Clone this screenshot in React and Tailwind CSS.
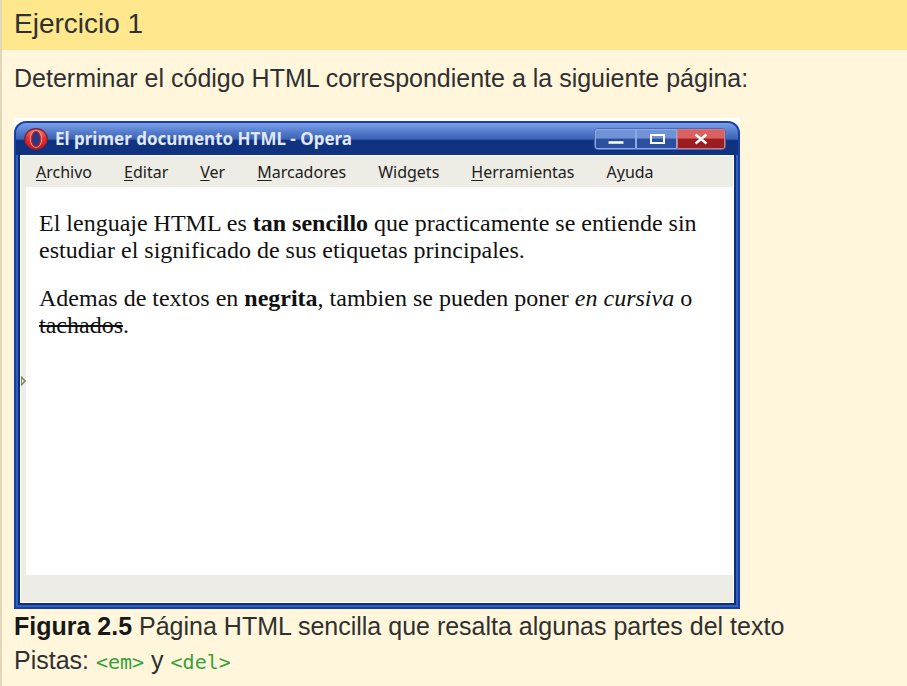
const menus = [
  ["", "A", "rchivo"],
  ["", "E", "ditar"],
  ["", "V", "er"],
  ["", "M", "arcadores"],
  ["Wid", "g", "ets"],
  ["", "H", "erramientas"],
  ["A", "y", "uda"],
];

function OperaLogo() {
  return (
    <svg className="h-6 w-6 shrink-0" viewBox="0 0 24 24" aria-hidden="true">
      <defs>
        <linearGradient id="opera" x1="0" y1="0" x2="0" y2="1">
          <stop offset="0" stopColor="#f08078" />
          <stop offset="0.45" stopColor="#e03030" />
          <stop offset="1" stopColor="#d81c20" />
        </linearGradient>
      </defs>
      <ellipse cx="12" cy="12" rx="12" ry="11" fill="#7c2438" />
      <ellipse cx="12" cy="12" rx="10.6" ry="9.6" fill="url(#opera)" />
      <ellipse cx="12" cy="12" rx="5.8" ry="8.4" fill="none" stroke="#f59a94" strokeWidth="1" />
      <ellipse cx="12" cy="12" rx="4" ry="7.4" fill="#203c88" stroke="#9c1c30" strokeWidth="1.2" />
    </svg>
  );
}

function TitleBar() {
  return (
    <div className="flex h-8 items-center bg-linear-to-b from-[#7aa0ea] from-0% via-[#3b62b4] via-50% to-[#0f3380] to-55% pr-3 pl-2">
      <OperaLogo />
      <h2 className="ml-[7px] flex-1 font-['Noto_Sans','Open_Sans',sans-serif] text-[17px] leading-6 font-bold whitespace-nowrap text-[#e0e8f8]">
        El primer documento HTML - Opera
      </h2>
      <div className="flex rounded-sm border border-[#4a6cb8]">
        <button aria-label="Minimizar" className="flex h-5 w-[41px] items-center justify-center rounded-l-xs border border-[#8caae4] bg-linear-to-b from-[#7292d8] from-45% to-[#2a509e] to-50%">
          <svg className="h-4 w-6" viewBox="0 0 24 16" aria-hidden="true">
            <path d="M4.500 11.500h15" stroke="#fff" strokeWidth="2.500" />
          </svg>
        </button>
        <button aria-label="Maximizar" className="flex h-5 w-[41px] items-center justify-center border border-[#8caae4] bg-linear-to-b from-[#7292d8] from-45% to-[#2a509e] to-50%">
          <svg className="h-4 w-6" viewBox="0 0 24 16" aria-hidden="true">
            <path d="M6 4h13v8h-13z" fill="none" stroke="#fff" strokeWidth="2" />
          </svg>
        </button>
        <button aria-label="Cerrar" className="flex h-5 w-12 items-center justify-center rounded-r-xs border border-[#d87878] bg-linear-to-b from-[#dc6060] from-45% to-[#9c1c20] to-50%">
          <svg className="h-4 w-6" viewBox="0 0 24 16" aria-hidden="true">
            <path d="M6.500 3.500l11 9M17.500 3.500l-11 9" stroke="#fff" strokeWidth="2.400" />
          </svg>
        </button>
      </div>
    </div>
  );
}

function BrowserWindow() {
  return (
    <div className="max-w-[726px] bg-white pt-[3px]">
      <div className="flex h-[488px] flex-col overflow-hidden rounded-t-xl border-2 border-[#1a3eac] bg-[#3060b8]">
        <TitleBar />
        <div className="mx-0.5 mb-0.5 flex min-h-0 flex-1 flex-col border-2 border-t-0 border-[#0c3078] bg-[#eeede5]">
          <nav className="flex h-8 shrink-0 gap-8 overflow-hidden border-x border-t border-white pl-[15px] font-['Noto_Sans','Open_Sans',sans-serif] text-base leading-8 text-[#202020]">
            {menus.map(([before, key, after]) => (
              <button key={before + key + after} className="whitespace-nowrap">
                {before}
                <span className="underline underline-offset-2">{key}</span>
                {after}
              </button>
            ))}
          </nav>
          <div className="flex min-h-0 flex-1 border-x border-white">
            <div className="flex w-[5px] shrink-0 items-center">
              <svg className="h-3 w-1.5" viewBox="0 0 6 12" aria-hidden="true">
                <path d="M0 1l5 5-5 5z" fill="#eeede5" stroke="#85805c" strokeWidth="2" />
              </svg>
            </div>
            <article className="flex-1 bg-white pt-[23px] pr-5 pl-[13px] font-['Liberation_Serif',serif] text-2xl leading-[27px] text-[#101010]">
              <p>
                El lenguaje HTML es <strong>tan sencillo</strong> que practicamente se entiende sin estudiar el significado
                de sus etiquetas principales.
              </p>
              <p className="mt-[21px]">
                Ademas de textos en <strong>negrita</strong>, tambien se pueden poner <em>en cursiva</em> o{" "}
                <del>tachados</del>.
              </p>
            </article>
          </div>
          <footer className="h-7 shrink-0 border-x border-b border-white" />
        </div>
      </div>
    </div>
  );
}

export default function App() {
  return (
    <main className="min-h-screen border-l-2 border-[#e0d8b8] bg-[#fff6dc] font-['Liberation_Sans',Arial,sans-serif] text-[#303030]">
      <h1 className="h-[50px] bg-[#ffe78e] pl-3 text-[28px] leading-[47px]">Ejercicio 1</h1>
      <section className="px-3 text-[25px]">
        <p className="pt-3 leading-8">Determinar el código HTML correspondiente a la siguiente página:</p>
        <figure className="mt-6">
          <BrowserWindow />
          <figcaption className="leading-[34px]">
            <strong className="text-[#181818]">Figura 2.5</strong> Página HTML sencilla que resalta algunas partes del texto
          </figcaption>
        </figure>
        <p className="leading-[34px]">
          Pistas: <code className="font-['DejaVu_Sans_Mono',monospace] text-[20px] text-[#38a038]">&lt;em&gt;</code> y{" "}
          <code className="font-['DejaVu_Sans_Mono',monospace] text-[20px] text-[#38a038]">&lt;del&gt;</code>
        </p>
      </section>
    </main>
  );
}
